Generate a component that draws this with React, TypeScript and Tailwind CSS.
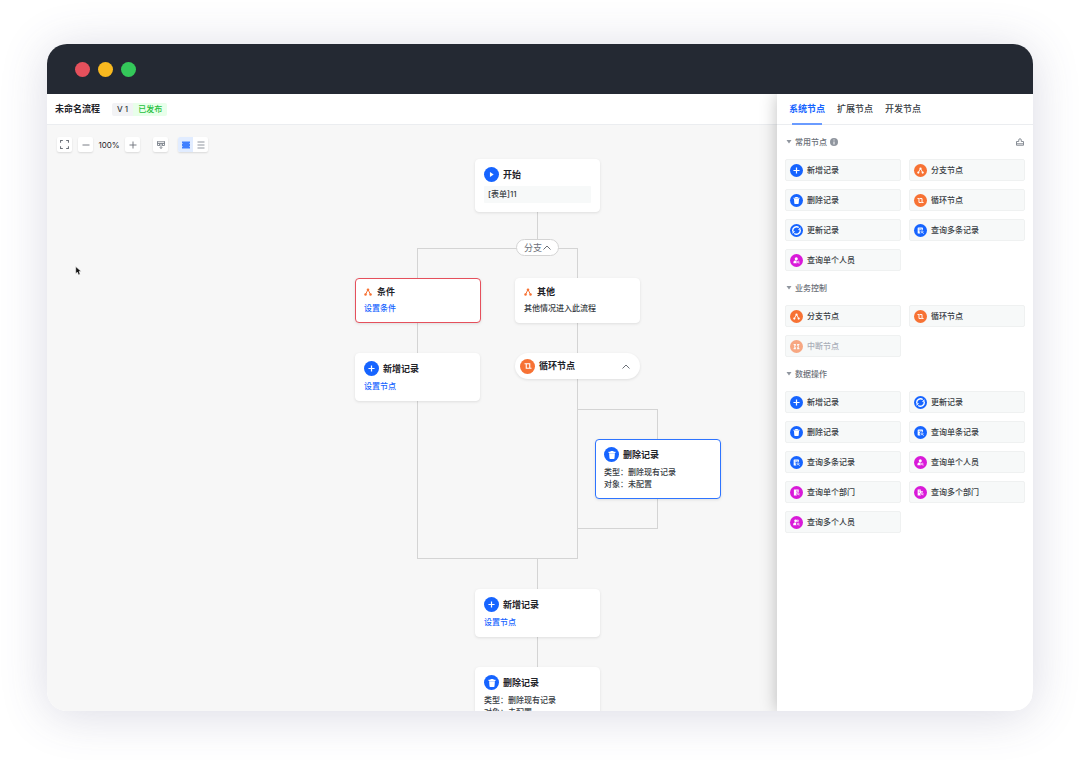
import React from "react";

type IconName =
  | "plus"
  | "trash"
  | "refresh"
  | "search"
  | "searchList"
  | "person"
  | "people"
  | "dept"
  | "depts"
  | "branch"
  | "loop"
  | "stop"
  | "play";

const BLUE = "bg-[#1664ff]";
const ORANGE = "bg-[#f77234]";
const PINK = "bg-[#d91ad9]";

const ICON_COLORS: Record<IconName, string> = {
  plus: BLUE,
  trash: BLUE,
  refresh: BLUE,
  search: BLUE,
  searchList: BLUE,
  play: BLUE,
  person: PINK,
  people: PINK,
  dept: PINK,
  depts: PINK,
  branch: ORANGE,
  loop: ORANGE,
  stop: ORANGE,
};

// Every glyph is drawn on a 16x16 grid
const GLYPHS: Record<IconName, React.ReactNode> = {
  plus: <path d="M8 1v14M1 8h14" fill="none" stroke="currentColor" strokeWidth="2.8" />,
  trash: (
    <path d="M5 0h6v1.500h4v2.300H1V1.500h4zM2.200 4.600h11.600L13 14.500a1.500 1.500 0 0 1-1.500 1.500h-7A1.500 1.500 0 0 1 3 14.500z" />
  ),
  refresh: (
    <g>
      <path
        d="M1.500 9.500A6.700 6.700 0 0 1 12 2.700M14.500 6.500A6.700 6.700 0 0 1 4 13.300"
        fill="none"
        stroke="currentColor"
        strokeWidth="2.400"
      />
      <path d="M15 2v4.500h-4.500zM1 14V9.500h4.500z" />
    </g>
  ),
  search: (
    <g>
      <path d="M3 1h9a1.500 1.500 0 0 1 1.500 1.500V7A4.500 4.500 0 0 0 8 15H3a1.500 1.500 0 0 1-1.500-1.500v-11A1.500 1.500 0 0 1 3 1z" />
      <path d="M4 5h7" stroke="#1664ff" strokeWidth="1.800" />
      <circle cx="11.500" cy="11" r="2.300" fill="none" stroke="currentColor" strokeWidth="1.600" />
      <path d="M13 13l2.200 2.200" stroke="currentColor" strokeWidth="1.800" />
    </g>
  ),
  searchList: (
    <g>
      <path d="M3 1h9a1.500 1.500 0 0 1 1.500 1.500V7A4.500 4.500 0 0 0 8 15H3a1.500 1.500 0 0 1-1.500-1.500v-11A1.500 1.500 0 0 1 3 1z" />
      <path d="M4 4.500h7M4 7.800h3.500" stroke="#1664ff" strokeWidth="1.200" />
      <circle cx="11.500" cy="11" r="2.300" fill="none" stroke="currentColor" strokeWidth="1.600" />
      <path d="M13 13l2.200 2.200" stroke="currentColor" strokeWidth="1.800" />
    </g>
  ),
  person: (
    <g>
      <circle cx="7.500" cy="4.200" r="3.500" />
      <path d="M1 14.500V12c0-2.500 2-4 4.500-4H9c-1.500 2-1.300 4.500.3 6.500z" />
      <circle cx="12" cy="11.500" r="2" fill="none" stroke="currentColor" strokeWidth="1.600" />
      <path d="M13.400 13l1.800 1.800" stroke="currentColor" strokeWidth="1.600" />
    </g>
  ),
  people: (
    <g>
      <circle cx="6" cy="4.200" r="3.200" />
      <path d="M10 1.200a3 3 0 0 1 0 6z" />
      <path d="M.5 14.500V12c0-2.500 2-4 4-4H8c-1.500 2-1.300 4.500.3 6.500z" />
      <circle cx="12" cy="11.500" r="2" fill="none" stroke="currentColor" strokeWidth="1.600" />
      <path d="M13.400 13l1.800 1.800" stroke="currentColor" strokeWidth="1.600" />
    </g>
  ),
  dept: (
    <g>
      <path d="M2 1h11v6.500A4.500 4.500 0 0 0 9 15H2z" />
      <path d="M9 3v5" stroke="#d91ad9" strokeWidth="2" />
      <circle cx="12" cy="11" r="2" fill="none" stroke="currentColor" strokeWidth="1.600" />
      <path d="M13.400 12.500l2 2" stroke="currentColor" strokeWidth="1.600" />
    </g>
  ),
  depts: (
    <g>
      <path d="M1.500 1H8.500v4H13.500v2.500A4.500 4.500 0 0 0 9 15H1.500z" />
      <path d="M4 4.500h2.500M4 8h2.500" stroke="#d91ad9" strokeWidth="1.400" />
      <circle cx="12" cy="11" r="2" fill="none" stroke="currentColor" strokeWidth="1.600" />
      <path d="M13.400 12.500l2 2" stroke="currentColor" strokeWidth="1.600" />
    </g>
  ),
  branch: (
    <g>
      <circle cx="8" cy="3.500" r="2.600" />
      <circle cx="3" cy="12.800" r="2.500" />
      <circle cx="13" cy="12.800" r="2.500" />
      <path d="M7.500 4L3.500 12M8.500 4l4 8" fill="none" stroke="currentColor" strokeWidth="2" />
    </g>
  ),
  loop: (
    <path d="M1 3.500h3.500v9h6.500M5.500 3.500h6v9H15" fill="none" stroke="currentColor" strokeWidth="2.200" />
  ),
  stop: (
    <path d="M1.500 2H6.500v4.500H5v3h1.500V14h-5v-2.500H3v-7H1.500zM9.500 2h5v2.500H13v7h1.500V14h-5V9.500H11v-3H9.500z" />
  ),
  play: <path d="M3 0l12 8-12 8z" />,
};

const Glyph: React.FC<{ name: IconName; className: string }> = ({ name, className }) => (
  <svg viewBox="0 0 16 16" fill="currentColor" className={className} aria-hidden="true">
    {GLYPHS[name]}
  </svg>
);

const NodeIcon: React.FC<{ name: IconName; large?: boolean }> = ({ name, large }) => (
  <span
    className={`flex shrink-0 items-center justify-center rounded-full text-white ${ICON_COLORS[name]} ${
      large ? "size-[15px]" : "size-[13px]"
    }`}
  >
    <Glyph
      name={name}
      className={
        name === "play" ? "size-[5px]" : name === "refresh" ? "size-[9px]" : name === "plus" || !large ? "size-[7px]" : "size-2"
      }
    />
  </span>
);

interface PaletteItem {
  icon: IconName;
  label: string;
  disabled?: boolean;
}

interface PaletteGroup {
  title: string;
  pinned?: boolean;
  items: PaletteItem[];
}

const GROUPS: PaletteGroup[] = [
  {
    title: "常用节点",
    pinned: true,
    items: [
      { icon: "plus", label: "新增记录" },
      { icon: "branch", label: "分支节点" },
      { icon: "trash", label: "删除记录" },
      { icon: "loop", label: "循环节点" },
      { icon: "refresh", label: "更新记录" },
      { icon: "searchList", label: "查询多条记录" },
      { icon: "person", label: "查询单个人员" },
    ],
  },
  {
    title: "业务控制",
    items: [
      { icon: "branch", label: "分支节点" },
      { icon: "loop", label: "循环节点" },
      { icon: "stop", label: "中断节点", disabled: true },
    ],
  },
  {
    title: "数据操作",
    items: [
      { icon: "plus", label: "新增记录" },
      { icon: "refresh", label: "更新记录" },
      { icon: "trash", label: "删除记录" },
      { icon: "search", label: "查询单条记录" },
      { icon: "searchList", label: "查询多条记录" },
      { icon: "person", label: "查询单个人员" },
      { icon: "dept", label: "查询单个部门" },
      { icon: "depts", label: "查询多个部门" },
      { icon: "people", label: "查询多个人员" },
    ],
  },
];

const TABS = ["系统节点", "扩展节点", "开发节点"];

const Palette: React.FC = () => (
  <aside className="relative z-10 flex w-64 shrink-0 flex-col bg-white shadow-[0_0_16px_rgba(0,0,0,0.25)]">
    <div role="tablist" className="flex h-[31px] shrink-0 gap-3 border-b border-[#ebedf0] px-3">
      {TABS.map((tab, i) => (
        <button
          key={tab}
          type="button"
          role="tab"
          aria-selected={i === 0}
          className={`relative text-[9px] ${i === 0 ? "font-bold text-[#1664ff]" : "font-medium text-[#373c43]"}`}
        >
          {tab}
          {i === 0 && <span className="absolute inset-x-[3px] -bottom-px h-[2px] bg-[#6a9bff]" />}
        </button>
      ))}
    </div>
    <div className="flex flex-col px-2">
      {GROUPS.map((group) => (
        <section key={group.title} className="pt-[11px]">
          <div className="flex h-3 items-center justify-between">
            <button type="button" className="flex items-center gap-[3px] text-[8px] font-medium text-[#6b7078]">
              <svg viewBox="0 0 12 8" className="ml-px h-1 w-[6px]" fill="#8f959e" aria-hidden="true">
                <path d="M1 0h10L6 7z" />
              </svg>
              {group.title}
              {group.pinned && (
                <svg viewBox="0 0 16 16" className="size-2" aria-hidden="true">
                  <circle cx="8" cy="8" r="8" fill="#8f959e" />
                  <path d="M8 3v2M8 7v6" stroke="#fff" strokeWidth="2" />
                </svg>
              )}
            </button>
            {group.pinned && (
              <button type="button" aria-label="固定" className="mr-px">
                <svg viewBox="0 0 16 16" className="size-2" fill="none" stroke="#7d838c" strokeWidth="1.800" aria-hidden="true">
                  <path d="M5.500 7V4a2.500 2.500 0 0 1 5 0v3H15v7.500H1V7zM1 11.500h14" />
                </svg>
              </button>
            )}
          </div>
          <div className="mt-[11px] grid grid-cols-2 gap-2">
            {group.items.map((item) => (
              <button
                key={item.label}
                type="button"
                disabled={item.disabled}
                className="flex h-[22px] items-center gap-1 rounded-[2px] border border-[#eff1f1] bg-[#f7f9f9] px-1 text-[8px] font-medium text-[#373c43] disabled:text-[#a9aeb8]"
              >
                <span className={item.disabled ? "opacity-60" : undefined}>
                  <NodeIcon name={item.icon} />
                </span>
                {item.label}
              </button>
            ))}
          </div>
        </section>
      ))}
    </div>
  </aside>
);

interface FlowNodeProps {
  icon: IconName;
  title: string;
  place: string;
  frame?: string;
  plainIcon?: boolean;
  children: React.ReactNode;
}

const FlowNode: React.FC<FlowNodeProps> = ({ icon, title, place, frame, plainIcon, children }) => (
  <div
    className={`absolute rounded-[4px] border bg-white px-2 pt-[7px] pb-2 text-[8px] leading-3 font-medium text-[#373c43] shadow-[0_1px_3px_rgba(0,0,0,0.1)] ${
      frame ?? "border-white"
    } ${place}`}
  >
    <div className="flex items-center gap-1">
      {plainIcon ? (
        <Glyph name={icon} className="mr-px size-2 text-[#f77234]" />
      ) : (
        <NodeIcon name={icon} large />
      )}
      <h3 className="text-[9px] font-bold text-[#1f2329]">{title}</h3>
    </div>
    {children}
  </div>
);

const DeleteDetails: React.FC = () => (
  <div className="mt-1">
    <p>类型：删除现有记录</p>
    <p>对象：未配置</p>
  </div>
);

const TOOL = "flex size-[15px] items-center justify-center rounded-[2px] bg-white shadow-[0_1px_2px_rgba(0,0,0,0.12)]";

const Toolbar: React.FC = () => (
  <div className="relative flex items-center px-[10px] pt-3 text-[#6b7078]">
    <button type="button" aria-label="全屏" className={TOOL}>
      <svg viewBox="0 0 16 16" className="size-[9px]" fill="none" stroke="currentColor" strokeWidth="1.800" aria-hidden="true">
        <path d="M1 5V1h4M11 1h4v4M15 11v4h-4M5 15H1v-4" />
      </svg>
    </button>
    <button type="button" aria-label="缩小" className={`ml-[6px] ${TOOL}`}>
      <svg viewBox="0 0 16 16" className="size-2" stroke="currentColor" strokeWidth="1.800" aria-hidden="true">
        <path d="M1 8h14" />
      </svg>
    </button>
    <span className="w-8 text-center text-[8px] text-[#1f2329]">100%</span>
    <button type="button" aria-label="放大" className={TOOL}>
      <svg viewBox="0 0 16 16" className="size-2" stroke="currentColor" strokeWidth="1.800" aria-hidden="true">
        <path d="M1 8h14M8 1v14" />
      </svg>
    </button>
    <button type="button" aria-label="整理布局" className={`ml-[13px] ${TOOL}`}>
      <svg viewBox="0 0 16 16" className="size-2" fill="none" stroke="#7d838c" strokeWidth="1.800" aria-hidden="true">
        <path d="M0 1.500h16M0 5h16M1 1v8h3.500M15 1v8h-3.500M5 5v5M11 5v5M8 5v10M5.500 12.500L8 15l2.500-2.500" />
      </svg>
    </button>
    <div className="ml-[10px] flex overflow-hidden rounded-[2px] bg-white shadow-[0_1px_2px_rgba(0,0,0,0.12)]">
      <button type="button" aria-label="纵向" className="flex size-[15px] items-center justify-center bg-[#e1ecff]">
        <svg viewBox="0 0 16 16" className="size-2" fill="#4080ff" aria-hidden="true">
          <path d="M0 1h16v4H0zM0 6h16v4H0zM0 11h16v4H0zM2 1h12v14H2z" />
        </svg>
      </button>
      <button type="button" aria-label="列表" className="flex size-[15px] items-center justify-center">
        <svg viewBox="0 0 16 16" className="size-2" stroke="#8f959e" strokeWidth="2" aria-hidden="true">
          <path d="M1 2h14M1 8h14M1 14h14" />
        </svg>
      </button>
    </div>
  </div>
);

const Canvas: React.FC = () => (
  <div className="relative min-h-0 flex-1 overflow-hidden bg-[#f7f7f7]">
    <svg className="absolute top-0 left-0 h-[600px] w-[730px]" fill="none" stroke="#d4d4d4" shapeRendering="crispEdges" aria-hidden="true">
      <path d="M490 87V123M370 433V123H530V433ZM490 433V545M530 284H610V403H530" />
    </svg>

    <FlowNode icon="play" title="开始" place="top-[34px] left-[428px] w-[125px]">
      <p className="mt-1 h-[17px] rounded-[1px] bg-[#f7f9f9] px-1 leading-[17px]">[表单]11</p>
    </FlowNode>

    <button
      type="button"
      className="absolute top-[114px] left-[469px] flex h-[17px] w-[43px] items-center justify-center gap-px rounded-full border border-[#d4d4d4] bg-white text-[9px] text-[#6b7078]"
    >
      分支
      <svg viewBox="0 0 16 10" className="h-[5px] w-2" fill="none" stroke="currentColor" strokeWidth="2" aria-hidden="true">
        <path d="M1 9l7-7 7 7" />
      </svg>
    </button>

    <FlowNode icon="branch" title="条件" plainIcon frame="border-[#e5505c]" place="top-[153px] left-[308px] w-[126px]">
      <a href="#condition" className="mt-1 block text-[#1664ff]">
        设置条件
      </a>
    </FlowNode>
    <FlowNode icon="branch" title="其他" plainIcon place="top-[153px] left-[468px] w-[125px]">
      <p className="mt-1">其他情况进入此流程</p>
    </FlowNode>

    <FlowNode icon="plus" title="新增记录" place="top-[228px] left-[308px] w-[125px]">
      <a href="#node-1" className="mt-1 block text-[#1664ff]">
        设置节点
      </a>
    </FlowNode>

    <div className="absolute top-[228px] left-[468px] flex h-[26px] w-[125px] items-center gap-1 rounded-full bg-white pr-[10px] pl-[5px] shadow-[0_1px_3px_rgba(0,0,0,0.1)]">
      <NodeIcon name="loop" large />
      <h3 className="flex-1 text-[9px] font-bold text-[#1f2329]">循环节点</h3>
      <button type="button" aria-label="收起">
        <svg viewBox="0 0 16 10" className="h-[5px] w-2" fill="none" stroke="#6b7078" strokeWidth="2" aria-hidden="true">
          <path d="M1 9l7-7 7 7" />
        </svg>
      </button>
    </div>

    <FlowNode icon="trash" title="删除记录" frame="border-[#2e74ff]" place="top-[314px] left-[548px] w-[126px]">
      <DeleteDetails />
    </FlowNode>

    <FlowNode icon="plus" title="新增记录" place="top-[464px] left-[428px] w-[125px]">
      <a href="#node-2" className="mt-1 block text-[#1664ff]">
        设置节点
      </a>
    </FlowNode>
    <FlowNode icon="trash" title="删除记录" place="top-[542px] left-[428px] w-[125px]">
      <DeleteDetails />
    </FlowNode>

    <Toolbar />

    <svg viewBox="0 0 12 18" className="absolute top-[141px] left-7 h-[10px] w-[7px]" aria-hidden="true">
      <path d="M1 1v13l3-3 2 5 3-1-2-5h4z" fill="#111" stroke="#fff" />
    </svg>
  </div>
);

export default function App() {
  return (
    <div className="flex h-screen flex-col bg-white px-[47px] pt-11 pb-[49px] font-['Inter','Noto_Sans_CJK_SC',sans-serif]">
      <div className="flex min-h-0 flex-1 flex-col overflow-hidden rounded-[20px] bg-white shadow-[0_4px_48px_rgba(70,70,120,0.2)]">
        <div className="flex h-[50px] shrink-0 items-center gap-2 bg-[#242933] px-7">
          <span className="size-[15px] rounded-full bg-[#e5505c]" />
          <span className="size-[15px] rounded-full bg-[#f9b91f]" />
          <span className="size-[15px] rounded-full bg-[#34c85a]" />
        </div>
        <div className="flex min-h-0 flex-1 overflow-hidden">
          <main className="flex min-w-0 flex-1 flex-col">
            <header className="flex h-[31px] shrink-0 items-center border-b border-[#ebedf0] px-2">
              <h1 className="text-[9px] font-bold text-[#1f2329]">未命名流程</h1>
              <div className="ml-3 flex overflow-hidden rounded-[2px] text-[8px] leading-[13px] font-medium">
                <span className="bg-[#f2f3f5] px-[5px] text-[#373c43]">V 1</span>
                <span className="bg-[#e8ffea] px-[5px] text-[#26bf40]">已发布</span>
              </div>
            </header>
            <Canvas />
          </main>
          <Palette />
        </div>
      </div>
    </div>
  );
}
